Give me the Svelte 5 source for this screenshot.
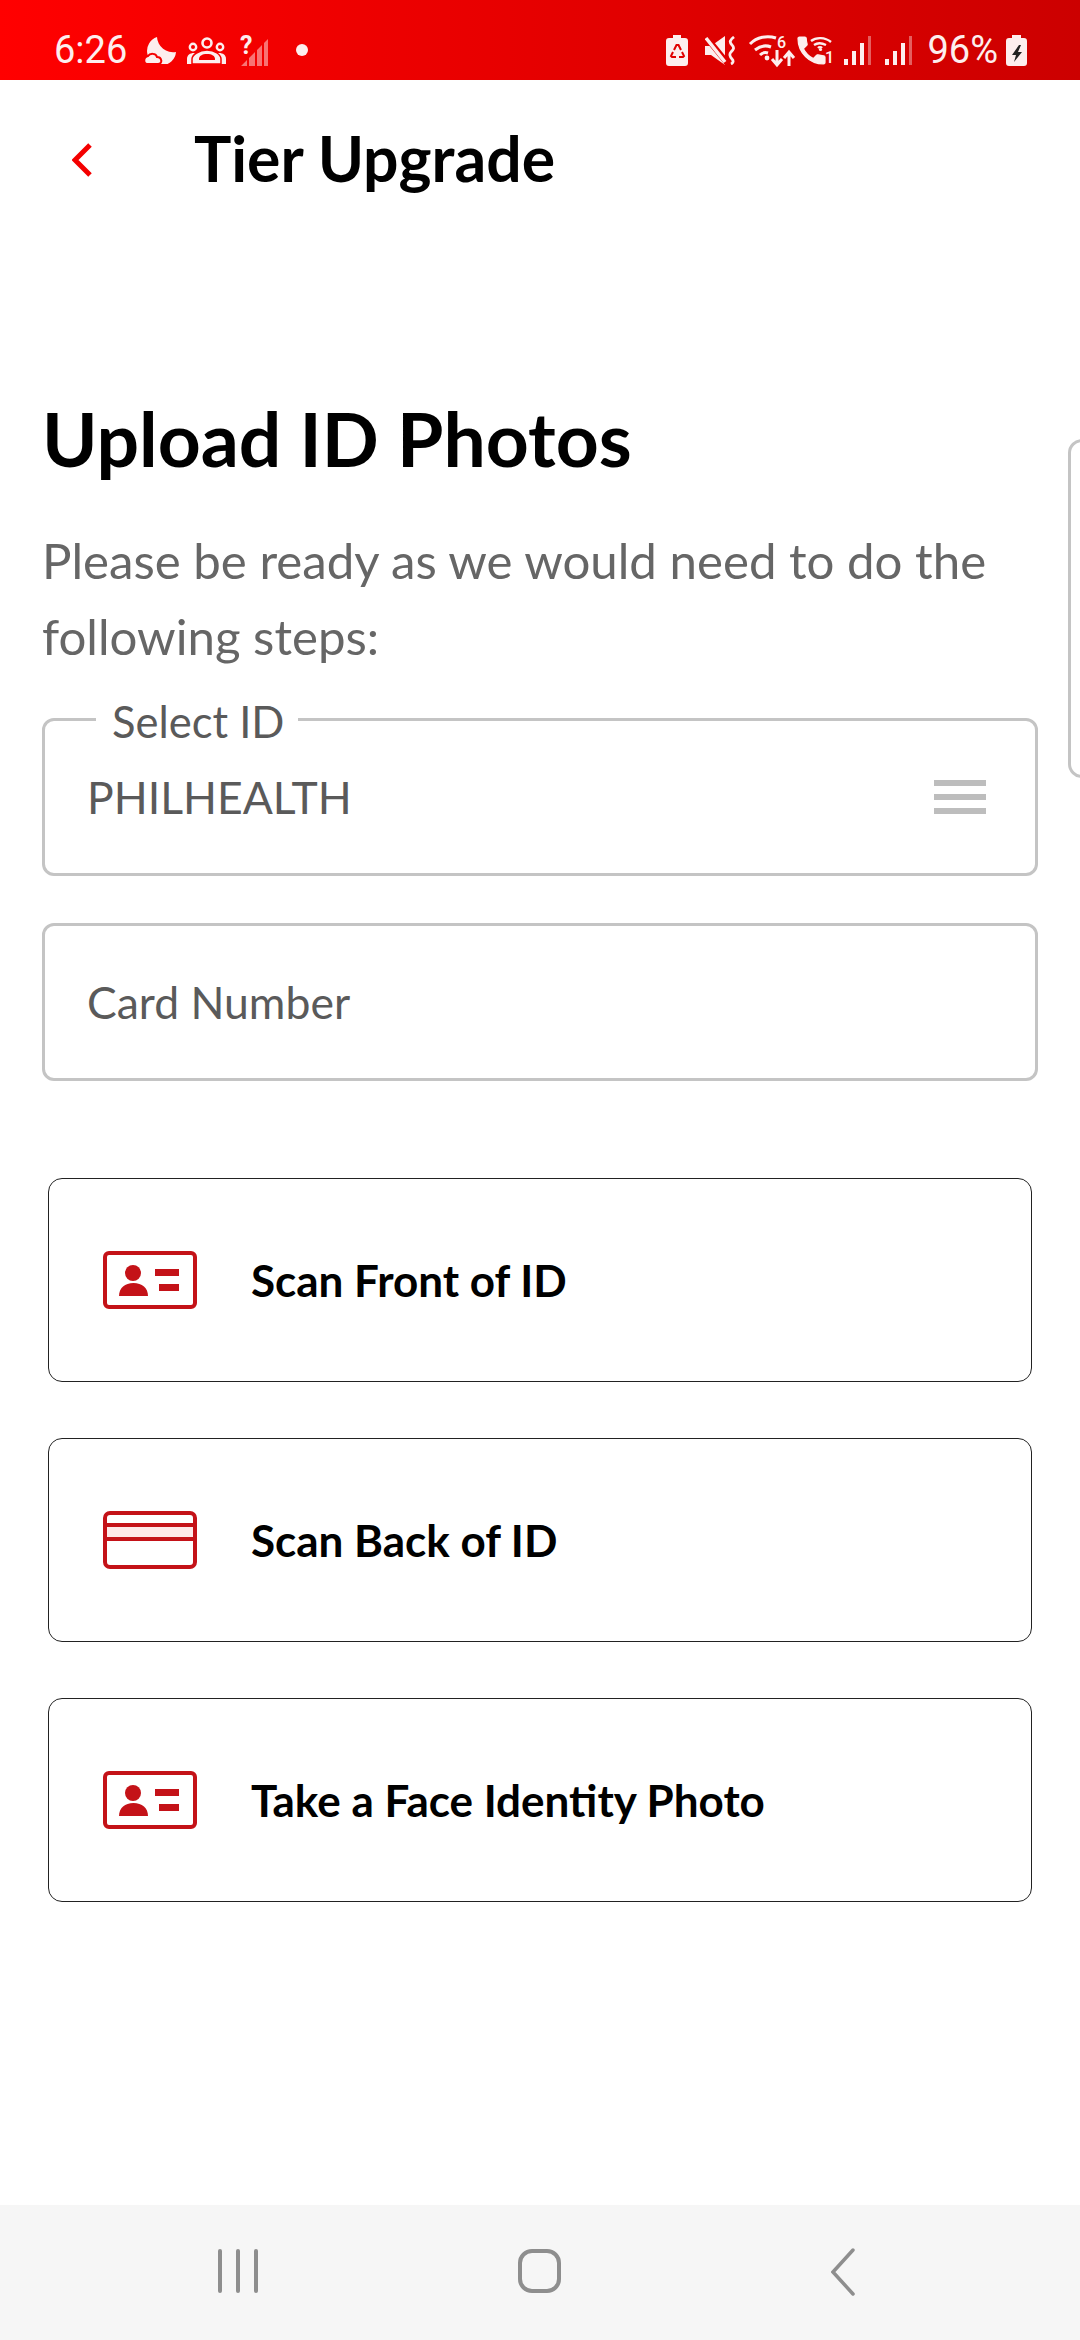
<script>
  let steps = [
    { label: 'Scan Front of ID', icon: 'id' },
    { label: 'Scan Back of ID', icon: 'card' },
    { label: 'Take a Face Identity Photo', icon: 'id' }
  ];
</script>

<div class="page">
  <div class="status">
    <div class="status-left">
      <span class="time">6:26</span>
      <svg class="ml17" width="32" height="27" viewBox="0 0 32 27">
        <path d="M13 0A14.500 14.500 0 1 0 32 15 16 16 0 0 1 13 0z" fill="#fdeeee"/>
        <path d="M4 27c-5 0-5-7 0-8 2-3 8-3 9 1 5 0 6 7 1 7z" fill="#fdeeee" stroke="#f50000" stroke-width="2"/>
      </svg>
      <svg class="ml11" width="39" height="27" viewBox="0 0 39 27">
        <circle cx="20" cy="6" r="4.500" fill="none" stroke="#fdeeee" stroke-width="2.600"/>
        <circle cx="6" cy="10" r="3.200" fill="none" stroke="#fdeeee" stroke-width="2.400"/>
        <circle cx="33" cy="10" r="3.200" fill="none" stroke="#fdeeee" stroke-width="2.400"/>
        <path d="M0 27v-5c0-4 3-6 7-6h25c4 0 7 2 7 6v5z" fill="#fdeeee"/>
        <path d="M5 27v-5c0-4 7-9 15-9s14 5 14 9v5z" fill="#fdeeee" stroke="#f50000" stroke-width="1.500"/>
        <path d="M12 22c0-3 3-5 8-5s8 2 8 5c0 1 0 1-1 1H13c-1 0-1 0-1-1z" fill="#f50000"/>
      </svg>
      <svg class="ml14 open" width="28" height="31" viewBox="0 0 28 31">
        <path d="M1 31l6-6v6zM9 23l6-6v14H9zM17 15l5-5v21h-5zM24 8l4-4v27h-4z" fill="#fff" opacity="0.45"/>
        <text x="0" y="19" class="q">?</text>
      </svg>
      <span class="dot"></span>
    </div>
    <div class="status-right">
      <svg width="22" height="31" viewBox="0 0 22 31">
        <path d="M7 0h8v3h4a3 3 0 0 1 3 3v22a3 3 0 0 1-3 3H3a3 3 0 0 1-3-3V6a3 3 0 0 1 3-3h4z" fill="#fdeeee"/>
        <g fill="none" stroke="#e00000" stroke-width="2">
          <path d="M8 15l2.500-5h2l2.500 5"/>
          <path d="M7 17l-2 4 1 1h4"/>
          <path d="M13 22h4l1-1-2-4"/>
        </g>
      </svg>
      <svg class="ml17" width="30" height="29" viewBox="0 0 30 29">
        <path d="M0 10h6L20 0v29L6 19H0z" fill="#fdeeee"/>
        <path d="M1 1l22 27" stroke="#e00000" stroke-width="6"/>
        <path d="M1 2l19 24" stroke="#fdeeee" stroke-width="3.500"/>
        <path d="M29 1c-4 3-5 5-2 8s1 5-1 7-1 5 1 7 1 4-1 5" fill="none" stroke="#fdeeee" stroke-width="2.800"/>
      </svg>
      <svg class="ml14 open" width="45" height="32" viewBox="0 0 45 32" fill="none" stroke="#fdeeee" stroke-width="3">
        <path d="M1 10c7-7 17-9 26-6M6 16c5-4 11-5 16-3M11 21c2-2 5-3 8-2"/>
        <circle cx="18" cy="24" r="2.400" fill="#fdeeee" stroke="none"/>
        <path d="M28 16v14M23 25l5 6 5-6M40 32V19M35 24l5-6 5 6"/>
        <text x="28" y="14" class="tiny">6</text>
      </svg>
      <svg class="ml4 open" width="36" height="28" viewBox="0 0 36 28">
        <path transform="translate(-4.500 -3.500) scale(1.500)" d="M6.620 10.790c1.440 2.830 3.760 5.140 6.590 6.590l2.200-2.200c.27-.27.67-.36 1.020-.24 1.120.37 2.330.57 3.570.57.55 0 1 .45 1 1V20c0 .55-.45 1-1 1-9.390 0-17-7.610-17-17 0-.55.45-1 1-1h3.500c.55 0 1 .45 1 1 0 1.250.2 2.450.57 3.570.11.350.03.740-.25 1.020l-2.200 2.200z" fill="#fdeeee" stroke="#fdeeee" stroke-width="0.800"/>
        <path d="M13 5c5-4 14-4 20 1M16 9c3-2 8-2 12 0M20 12c1-1 3-1 4 0" fill="none" stroke="#fdeeee" stroke-width="2.400"/>
        <circle cx="22.500" cy="13.500" r="1.600" fill="#fdeeee"/>
        <text x="27" y="27" class="tiny">1</text>
      </svg>
      <svg class="ml10" width="27" height="29" viewBox="0 0 27 29">
        <path d="M0 23h4v6H0zM8 15h4v14H8zM16 7h4v22h-4z" fill="#fdeeee"/>
        <path d="M24 0h3v29h-3z" fill="#fdeeee" opacity="0.4"/>
      </svg>
      <svg class="ml14" width="27" height="29" viewBox="0 0 27 29">
        <path d="M0 23h4v6H0zM8 15h4v14H8zM16 7h4v22h-4z" fill="#fdeeee"/>
        <path d="M24 0h3v29h-3z" fill="#fdeeee" opacity="0.4"/>
      </svg>
      <span class="pct">96%</span>
      <svg class="ml8" width="21" height="31" viewBox="0 0 21 31">
        <path d="M6 0h9v3h3a3 3 0 0 1 3 3v22a3 3 0 0 1-3 3H3a3 3 0 0 1-3-3V6a3 3 0 0 1 3-3h3z" fill="#fdeeee"/>
        <path d="M13 10L6 20h4l-2 7 8-10h-4l3-7z" fill="#222"/>
      </svg>
    </div>
  </div>

  <header class="top">
    <svg class="chevron" width="20" height="34" viewBox="0 0 20 34">
      <path d="M18 2L3 17l15 15" fill="none" stroke="#f40000" stroke-width="5"/>
    </svg>
    <h1>Tier Upgrade</h1>
  </header>

  <main>
    <h2>Upload ID Photos</h2>
    <p>Please be ready as we would need to do the following steps:</p>

    <div class="field select">
      <span class="legend">Select ID</span>
      <span class="value">PHILHEALTH</span>
      <span class="bars"><i></i><i></i><i></i></span>
    </div>
    <div class="field">
      <span class="value">Card Number</span>
    </div>

    <div class="steps">
      {#each steps as step}
        <button class="step">
          {#if step.icon === 'id'}
            <svg width="94" height="58" viewBox="0 0 94 58">
              <rect x="2" y="2" width="90" height="54" rx="4" fill="none" stroke="#c41218" stroke-width="4"/>
              <circle cx="30" cy="22" r="8" fill="#c41218"/>
              <path d="M16 45c0-8 6-13 14.500-13S45 37 45 45z" fill="#c41218"/>
              <path d="M52 18h24v7H52zM56 33h20v7H56z" fill="#c41218"/>
            </svg>
          {:else}
            <svg width="94" height="58" viewBox="0 0 94 58" fill="none" stroke="#c41218">
              <path d="M2 14h90v14H2z" fill="#fde8e8" stroke="none"/>
              <rect x="2" y="2" width="90" height="54" rx="5" stroke-width="4"/>
              <path d="M2 14h90M2 28h90" stroke-width="4"/>
            </svg>
          {/if}
          <span>{step.label}</span>
        </button>
      {/each}
    </div>
  </main>

  <nav>
    <span class="recents"><i></i><i></i><i></i></span>
    <span class="home"></span>
    <svg width="24" height="48" viewBox="0 0 24 48">
      <path d="M22 2L2 24l20 22" fill="none" stroke="#8e8e8e" stroke-width="3.500" stroke-linecap="round"/>
    </svg>
  </nav>

  <div class="peek"></div>
</div>

<style>
  :global(body) { margin: 0; background: #fff; }
  .page {
    position: relative; width: 1080px; height: 2340px; overflow: hidden;
    display: flex; flex-direction: column; font-family: Lato, sans-serif;
  }

  .status {
    height: 80px; box-sizing: border-box; padding: 20px 53px 0 54px;
    display: flex; justify-content: space-between; align-items: center;
    background: linear-gradient(90deg, #ff0000, #cc0000); color: #fdeeee;
    font-family: Roboto, sans-serif;
  }
  .status-left, .status-right { display: flex; align-items: center; }
  .open { overflow: visible; }
  .time { font-size: 38px; line-height: 60px; }
  .pct { font-size: 38px; line-height: 60px; margin-left: 15px; }
  .dot { width: 12px; height: 12px; border-radius: 50%; background: #fdeeee; margin-left: 28px; }
  .ml4 { margin-left: 4px; }
  .ml8 { margin-left: 8px; }
  .ml10 { margin-left: 10px; }
  .ml11 { margin-left: 11px; }
  .ml14 { margin-left: 14px; }
  .ml17 { margin-left: 17px; }
  .q { font: 700 25px Roboto, sans-serif; fill: #fdeeee; }
  .tiny { font: 500 16px Roboto, sans-serif; fill: #fdeeee; stroke: none; }

  .top { height: 160px; display: flex; align-items: center; padding-left: 72px; }
  .chevron { flex: none; }
  h1 { margin: 0 0 5px 102px; font-size: 62.5px; font-weight: 700; color: #000; }

  main { flex: 1; padding: 0 42px; }
  h2 { margin: 154px 0 0; font-size: 75px; line-height: 88px; font-weight: 700; color: #000; }
  p { margin: 40px 0 0; font-size: 49.2px; line-height: 76px; color: #666; }

  .field {
    position: relative; height: 158px; box-sizing: border-box; margin-top: 47px;
    border: 3px solid #c4c4c4; border-radius: 12px; padding: 0 43px 0 42px;
    display: flex; align-items: center; justify-content: space-between;
    font-size: 44.5px; color: #5a5a5a;
  }
  .select { margin-top: 44px; }
  .value { line-height: 50px; }
  .legend {
    position: absolute; left: 51px; top: -25px; padding: 0 14px 0 16px; background: #fff;
    line-height: 50px; font-size: 43.500px;
  }
  .bars { display: flex; flex-direction: column; gap: 8px; width: 52px; margin-right: 6px; }
  .bars i { display: block; height: 6px; background: #bdbdbd; }

  .steps { margin-top: 97px; padding: 0 6px; display: flex; flex-direction: column; gap: 56px; }
  .step {
    height: 204px; box-sizing: border-box; background: #fff; padding: 0 0 0 54px;
    border: 1px solid #222; border-radius: 14px; font: inherit;
    display: flex; align-items: center; gap: 54px; text-align: left;
    font-size: 44px; font-weight: 700; color: #000;
  }

  nav {
    height: 135px; background: #f6f6f6; box-sizing: border-box;
    position: relative;
  }
  .recents { position: absolute; left: 218px; top: 44px; display: flex; gap: 14px; }
  .recents i { display: block; width: 4px; height: 44px; border-radius: 2px; background: #8e8e8e; }
  .home {
    position: absolute; left: 518px; top: 44px; width: 43px; height: 44px; box-sizing: border-box;
    border: 4px solid #8e8e8e; border-radius: 14px;
  }
  nav svg { position: absolute; left: 831px; top: 43px; }

  .peek {
    position: absolute; left: 1068px; top: 439px; width: 30px; height: 339px; box-sizing: border-box;
    border: 3px solid #c4c4c4; border-radius: 14px;
  }
</style>
